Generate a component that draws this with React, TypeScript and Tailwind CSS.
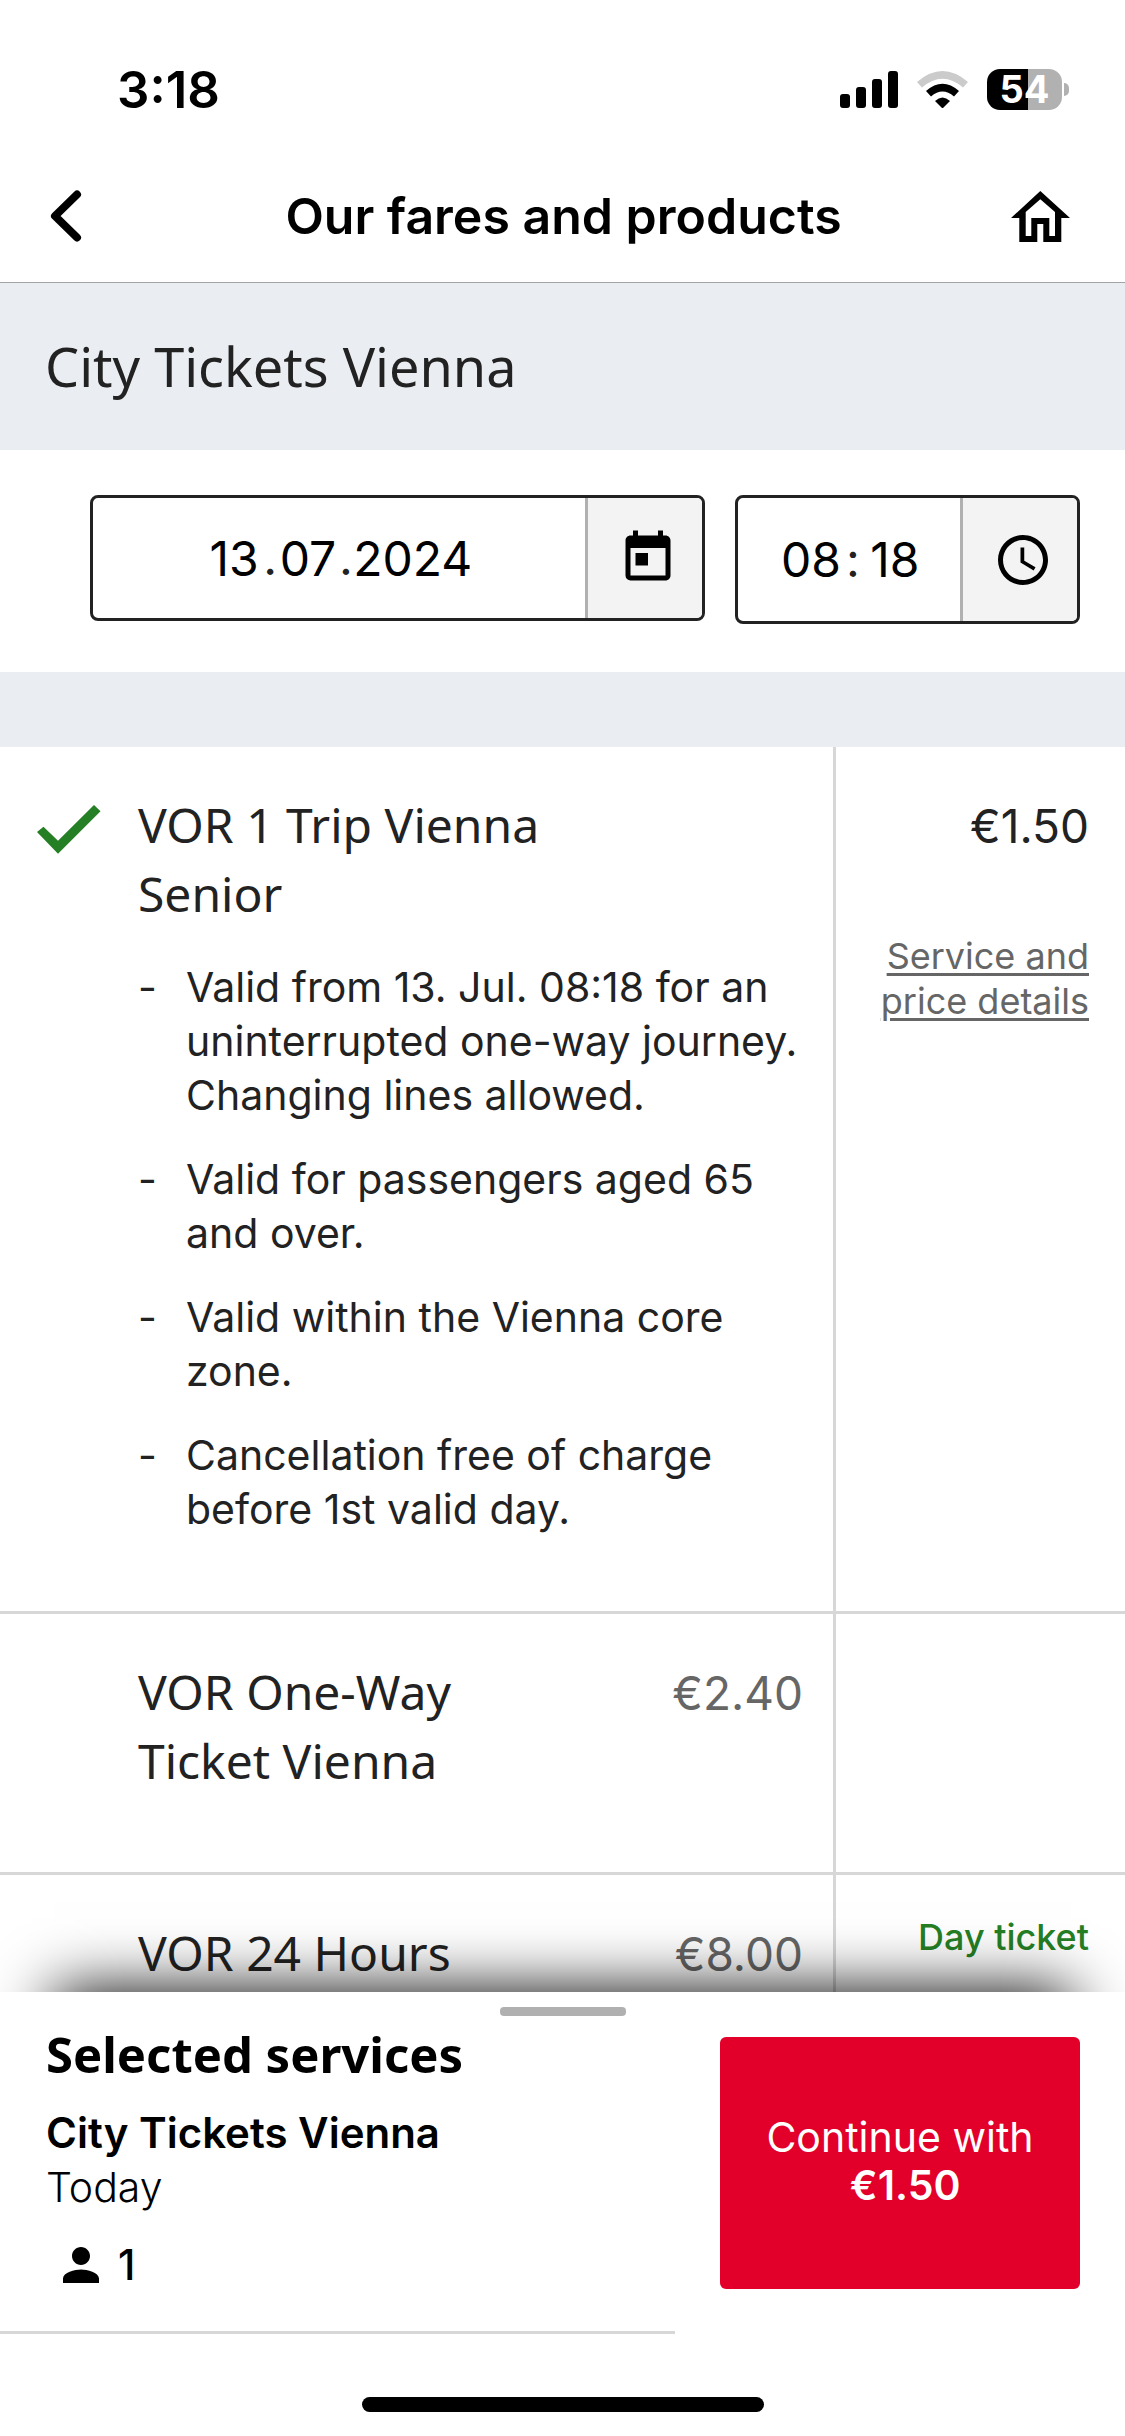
import type { ReactNode } from "react";
import { MdAccessTime, MdPerson, MdToday } from "react-icons/md";

interface Ticket {
  name: string;
  price: string;
  selected?: boolean;
  details?: string[];
  tag?: string;
}

const tickets: Ticket[] = [
  {
    name: "VOR 1 Trip Vienna Senior",
    price: "€1.50",
    selected: true,
    details: [
      "Valid from 13. Jul. 08:18 for an uninterrupted one-way journey. Changing lines allowed.",
      "Valid for passengers aged 65 and over.",
      "Valid within the Vienna core zone.",
      "Cancellation free of charge before 1st valid day.",
    ],
  },
  { name: "VOR One-Way Ticket Vienna", price: "€2.40" },
  { name: "VOR 24 Hours", price: "€8.00", tag: "Day ticket" },
];

const StatusBar = () => (
  <div className="flex h-[150px] items-center justify-between pt-7 pr-14 pl-[117px]">
    <span className="text-[51px] leading-none font-semibold">3:18</span>
    <div className="flex items-center">
      <svg width="58" height="37" viewBox="0 0 58 37" aria-hidden="true">
        <rect x="0" y="23" width="10" height="14" rx="3" />
        <rect x="16" y="16" width="10" height="21" rx="3" />
        <rect x="32" y="8" width="10" height="29" rx="3" />
        <rect x="48" y="0" width="10" height="37" rx="3" />
      </svg>
      <svg className="ml-[19px]" width="51" height="37" viewBox="0 0 51 37" aria-hidden="true">
        <path d="M0 11Q25.5 -11 51 11L46 16.5Q25.5 -1 5 16.5Z" fill="#cbcbcb" />
        <path d="M9 20Q25.5 5.5 42 20L37 25.5Q25.5 15.5 14 25.5Z" />
        <path d="M18 30Q25.5 23 33 30L25.5 37.5Z" />
      </svg>
      <div className="ml-[19px] flex h-[41px] w-[75px] items-center justify-center rounded-[13px] bg-linear-to-r from-black from-55% to-[#b1b1b1] to-55%">
        <span className="text-[38px] leading-none font-bold text-white">54</span>
      </div>
      <div className="ml-[2px] h-[13px] w-[5px] rounded-r-full bg-[#b1b1b1]" />
    </div>
  </div>
);

const Header = () => (
  <header className="flex h-[133px] items-center justify-between border-b border-[#a4a4a6] pr-[54px] pl-[50px]">
    <button type="button" aria-label="Back" className="w-[66px]">
      <svg width="32" height="52" viewBox="0 0 32 52" fill="none" stroke="#000" strokeWidth="8" strokeLinecap="round" strokeLinejoin="round">
        <path d="M27 4.5L5 26L27 47.5" />
      </svg>
    </button>
    <h1 className="text-[50px] leading-none font-semibold">Our fares and products</h1>
    <a href="#home" aria-label="Home">
      <svg width="60" height="51" viewBox="0 0 60 51">
        <path
          fillRule="evenodd"
          d="M29.3 0L59 27H50.3V51H32.3V33H26.3V51H8.3V27H0ZM29.3 8.3L14.7 21V45H20.3V27H38.3V45H44V21Z"
        />
      </svg>
    </a>
  </header>
);

interface FieldProps {
  label: string;
  icon: ReactNode;
  className: string;
  children: ReactNode;
}

const Field = ({ label, icon, className, children }: FieldProps) => (
  <div className={`flex overflow-hidden rounded-lg border-[3px] border-[#222] ${className}`}>
    <div className="flex flex-1 items-center justify-center text-[48px] leading-none">{children}</div>
    <button
      type="button"
      aria-label={label}
      className="flex w-[117px] items-center justify-center border-l-[3px] border-[#b0b0b0] bg-[#f3f3f3] pl-1.5"
    >
      {icon}
    </button>
  </div>
);

const TicketRow = ({ name, price, selected, details, tag }: Ticket) => (
  <li className="flex min-h-[261px] border-b-[3px] border-[#d7d7d7]">
    <div className="flex flex-1 pb-[75px]">
      <div className="w-[138px] shrink-0 pt-[58px] pl-[37px]">
        {selected && (
          <svg width="64" height="49" viewBox="0 0 64 49" fill="#257f24" aria-label="Selected">
            <path d="M0 27L6.5 21.7L21 35.7L57 0L63.5 6.3L21 48.7Z" />
          </svg>
        )}
      </div>
      <div className="flex-1 pt-[43px]">
        <div className="flex justify-between pr-[30px]">
          <h3 className="w-[450px] font-[Noto_Sans,sans-serif] text-[48px] leading-[69px]">{name}</h3>
          {!selected && <span className="text-[46px] leading-[72px] text-[#666]">{price}</span>}
        </div>
        {details && (
          <ul className="mt-[32px] flex flex-col gap-[30px] text-[41px] leading-[54px]">
            {details.map((detail) => (
              <li key={detail} className="flex">
                <span className="w-[48px] shrink-0">-</span>
                <span>{detail}</span>
              </li>
            ))}
          </ul>
        )}
      </div>
    </div>
    <div className="w-[292px] shrink-0 border-l-[3px] border-[#d7d7d7] pt-[40px] pr-9 text-right">
      {selected && (
        <>
          <p className="text-[46px] leading-[78px]">{price}</p>
          <a
            href="#details"
            className="mt-[69px] block text-[36px] leading-[45px] text-[#666] underline decoration-[3px] underline-offset-4"
          >
            Service and price details
          </a>
        </>
      )}
      {tag && <p className="text-[36px] leading-[45px] font-medium text-[#257f24]">{tag}</p>}
    </div>
  </li>
);

const SelectedServices = () => (
  <section className="relative shrink-0 bg-white text-black shadow-[0_-54px_60px_-54px_#000]">
    <div className="mx-auto mt-[15px] h-[9px] w-[126px] rounded bg-[#b0b0b0]" />
    <div className="flex">
      <div className="w-3/5 border-b-[3px] border-[#d7d7d7] pt-2 pb-[39px] pl-[46px]">
        <h2 className="font-[Noto_Sans,sans-serif] text-[49px] leading-[60px] font-bold">Selected services</h2>
        <p className="mt-[22px] text-[42px] leading-[54px] font-semibold">City Tickets Vienna</p>
        <p className="text-[41px] leading-[54px] font-light">Today</p>
        <p className="mt-6 flex items-center text-[42px] leading-[54px] font-medium">
          <MdPerson className="ml-[8px] size-[54px]" aria-label="Passengers" />
          <span className="ml-2.5">1</span>
        </p>
      </div>
      <div className="flex-1 pt-[21px] pr-[45px] pl-[45px]">
        <button
          type="button"
          className="h-[252px] w-full rounded-md bg-[#e2002a] pb-1 text-[41px] leading-[48px] text-white"
        >
          Continue with
          <br />
          <span className="font-semibold">&nbsp;€1.50</span>
        </button>
      </div>
    </div>
    <div className="mx-auto mt-[63px] mb-6 h-[15px] w-[402px] rounded-full bg-black" />
  </section>
);

const digits = "bg-transparent p-0 text-center text-black outline-none";

const App = () => {
  return (
    <div className="flex h-screen flex-col bg-white font-[Inter,sans-serif] text-[#222]">
      <div className="text-black">
        <StatusBar />
        <Header />
      </div>
      <main className="min-h-0 flex-1 overflow-y-auto [scrollbar-width:none]">
        <h2 className="bg-[#eaeef3] pl-[45px] font-[Noto_Sans,sans-serif] text-[54px] leading-[167px]">
          City Tickets Vienna
        </h2>
        <form className="flex items-start gap-[30px] pt-[45px] pr-[45px] pb-[48px] pl-[90px]">
          <Field label="Choose date" icon={<MdToday className="size-[60px] text-black" />} className="h-[126px] flex-1">
            <input aria-label="Day" defaultValue="13" className={`w-[58px] ${digits}`} />
            <span>.</span>
            <input aria-label="Month" defaultValue="07" className={`w-[62px] ${digits}`} />
            <span>.</span>
            <input aria-label="Year" defaultValue="2024" className={`w-[120px] ${digits}`} />
          </Field>
          <Field label="Choose time" icon={<MdAccessTime className="size-[60px] text-black" />} className="h-[129px] w-[345px]">
            <input aria-label="Hours" defaultValue="08" className={`ml-2 w-[62px] ${digits}`} />
            <span className="mx-1">:</span>
            <input aria-label="Minutes" defaultValue="18" className={`w-[62px] ${digits}`} />
          </Field>
        </form>
        <div className="h-[75px] bg-[#eaeef3]" />
        <ul>
          {tickets.map((ticket) => (
            <TicketRow key={ticket.name} {...ticket} />
          ))}
        </ul>
      </main>
      <SelectedServices />
    </div>
  );
};

export default App;
